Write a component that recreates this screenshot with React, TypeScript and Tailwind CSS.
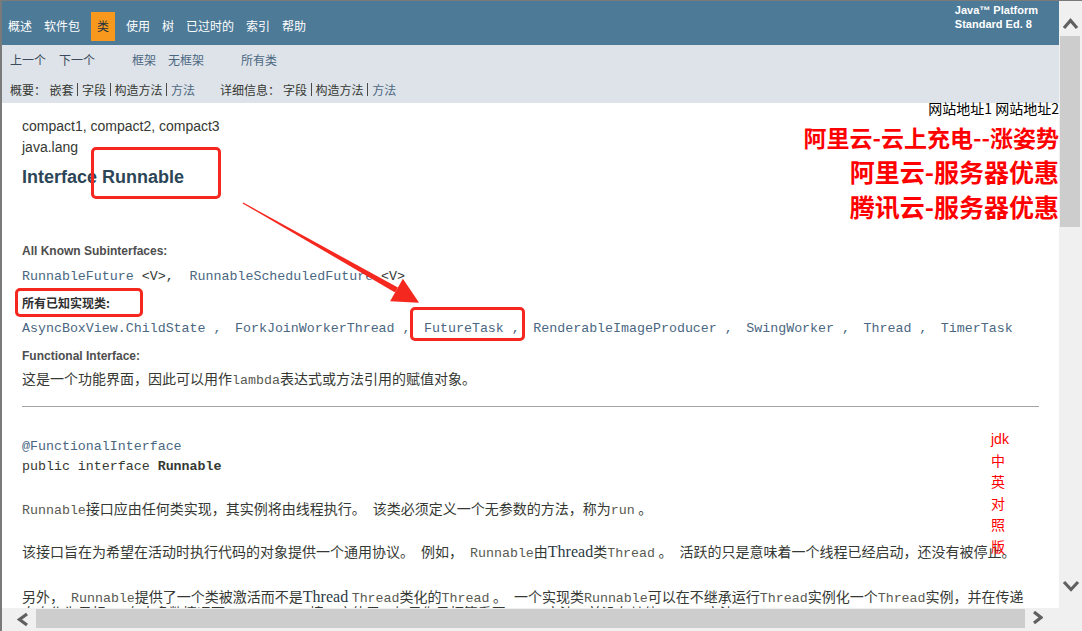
import React from "react";

const SANS = "font-['Liberation_Sans','Noto_Sans_CJK_SC',sans-serif]";
const CJK = "font-['Noto_Sans_CJK_SC',sans-serif]";
const MONO = "font-['Liberation_Mono','Noto_Sans_CJK_SC',monospace]";
const SERIF = "font-['Liberation_Serif','Noto_Sans_CJK_SC',serif]";

const topNav = [
    { name: "概述" },
    { name: "软件包" },
    { name: "类", active: true },
    { name: "使用" },
    { name: "树" },
    { name: "已过时的" },
    { name: "索引" },
    { name: "帮助" },
];

const implementing = [
    "AsyncBoxView.ChildState",
    "ForkJoinWorkerThread",
    "FutureTask",
    "RenderableImageProducer",
    "SwingWorker",
    "Thread",
    "TimerTask",
];

const Code = ({ children }: { children: React.ReactNode }) => (
    <code className={`${MONO} text-[13.3px] leading-none text-[#5a5a52]`}>{children}</code>
);

const Serif16 = ({ children }: { children: React.ReactNode }) => (
    <span className="text-[16px] leading-[12px] text-[#2c3a46]">{children}</span>
);

const Pipe = () => <span className="ml-[3.5px] mr-[4px] inline-block h-[13px] w-px bg-[#4a4a4a]"/>;

const Chevron = ({ dir }: { dir: "up" | "down" | "left" | "right" }) => {
    if (dir === "up") {
        return (
            <svg width="17" height="13" viewBox="0 0 17 13">
                <polyline points="2,11 8.5,3.5 15,11" fill="none" stroke="#606060" strokeWidth="3.2"/>
            </svg>
        );
    }
    if (dir === "down") {
        return (
            <svg width="18" height="12" viewBox="0 0 18 12">
                <polyline points="2,2 9,9.5 16,2" fill="none" stroke="#606060" strokeWidth="3.2"/>
            </svg>
        );
    }
    if (dir === "left") {
        return (
            <svg width="13" height="15" viewBox="0 0 13 15">
                <polyline points="11,2 3.5,7.5 11,13" fill="none" stroke="#606060" strokeWidth="3.2"/>
            </svg>
        );
    }
    return (
        <svg width="11" height="15" viewBox="0 0 11 15">
            <polyline points="2,2 9,7.5 2,13" fill="none" stroke="#606060" strokeWidth="3.2"/>
        </svg>
    );
};

const TopNav = () => (
    <div className="flex h-[44px] justify-between bg-[#4D7A97]">
        <ul className={`flex items-start pt-[11px] text-[12px] text-white ${CJK}`}>
            {topNav.map((item) => (
                <li key={item.name}
                    className={item.active
                        ? "mx-[5px] bg-[#F8981D] px-[6px] pt-[4px] pb-[6px] leading-[19px] text-[#253441]"
                        : "px-[6px] pt-[4px] pb-[6px] leading-[19px]"}>
                    {item.name}
                </li>
            ))}
        </ul>
        <div className={`pr-[21px] pt-[2px] text-[11px] font-bold leading-[14px] text-white ${SANS}`}>
            Java™ Platform<br/>Standard Ed. 8
        </div>
    </div>
);

const SubNav = () => (
    <div className={`h-[58px] bg-[#DEE3E9] pt-[5px] text-[12px] text-[#353833] ${CJK}`}>
        <div className="flex h-[19px] items-center pl-[8px]">
            <span className="text-[#3b4b5b]">上一个</span>
            <span className="ml-[13px] text-[#3b4b5b]">下一个</span>
            <span className="ml-[37px] text-[#4A6782]">框架</span>
            <span className="ml-[12px] text-[#4A6782]">无框架</span>
            <span className="ml-[37px] text-[#4A6782]">所有类</span>
        </div>
        <div className="mt-[11px] flex h-[19px] items-center pl-[8px]">
            <span>概要：</span>
            <span className="ml-[3.5px]">嵌套</span><Pipe/>
            <span>字段</span><Pipe/>
            <span>构造方法</span><Pipe/>
            <span className="text-[#4A6782]">方法</span>
            <span className="ml-[25px]">详细信息：</span>
            <span className="ml-[3px]">字段</span><Pipe/>
            <span>构造方法</span><Pipe/>
            <span className="text-[#4A6782]">方法</span>
        </div>
    </div>
);

const Content = () => (
    <div className={`flow-root px-[20px] text-[#353833] ${SANS}`}>
        <div className={`float-right -mr-[20px] text-right ${CJK}`}>
            <div className="text-[14px] leading-[10px] text-black">网站地址1 网站地址2</div>
            <div className="mt-[7px] text-[23px] font-bold leading-[34px] text-[#ff0000]">阿里云-云上充电--涨姿势</div>
            <div className="text-[25px] font-bold leading-[35px] text-[#ff0000]">阿里云-服务器优惠</div>
            <div className="text-[25px] font-bold leading-[35px] text-[#ff0000]">腾讯云-服务器优惠</div>
        </div>

        <div className="mt-[13px] text-[14px] leading-[20px]">compact1, compact2, compact3</div>
        <div className="mt-[1px] text-[14px] leading-[20px]">java.lang</div>
        <h2 className="mt-[8px] text-[18px] font-bold leading-[24px] text-[#2c4557]">Interface Runnable</h2>

        <div className="mt-[54px] text-[12px] font-bold leading-[16px] text-[#4E4E4E]">All Known Subinterfaces:</div>
        <div className={`mt-[8px] whitespace-pre text-[13.3px] leading-[20px] ${MONO}`}>
            <span className="text-[#4A6782]">RunnableFuture</span>
            <span>{" <V>,  "}</span>
            <span className="text-[#4A6782]">RunnableScheduledFuture</span>
            <span>{" <V>"}</span>
        </div>

        <div className={`mt-[8px] text-[12px] font-bold leading-[16px] text-[#2f2f2f] ${CJK}`}>所有已知实现类:</div>
        <div className={`mt-[7.5px] whitespace-pre text-[13.3px] leading-[20px] text-[#4A6782] ${MONO}`}>
            {implementing.map((name, i) => (
                <span key={name}>
                    {name}
                    {i < implementing.length - 1 && <span className="mr-[5.5px]">{" , "}</span>}
                </span>
            ))}
        </div>

        <div className="mt-[9px] text-[12px] font-bold leading-[16px] text-[#4E4E4E]">Functional Interface:</div>
        <div className={`mt-[6px] text-[14px] leading-[20px] ${SERIF}`}>
            这是一个功能界面，因此可以用作<Code>lambda</Code>表达式或方法引用的赋值对象。
        </div>

        <hr className="mt-[16px] border-t border-[#a4a4a4]"/>

        <div className={`mt-[30.5px] whitespace-pre text-[13.3px] leading-[20px] ${MONO}`}>
            <div className="text-[#4A6782]">@FunctionalInterface</div>
            <div>public interface <b>Runnable</b></div>
        </div>

        <div className={`mt-[25px] max-w-[1005px] text-[14px] leading-[16px] ${SERIF}`}>
            <Code>Runnable</Code>接口应由任何类实现，其实例将由线程执行。{"\u2002"}该类必须定义一个无参数的方法，称为<Code>run</Code> 。
        </div>
        <div className={`mt-[27px] max-w-[1005px] text-[14px] leading-[16px] ${SERIF}`}>
            该接口旨在为希望在活动时执行代码的对象提供一个通用协议。{"\u2002"}例如，{"\u2002"}<Code>Runnable</Code>由<Serif16>Thread</Serif16>类<Code>Thread</Code> 。{"\u2002"}活跃的只是意味着一个线程已经启动，还没有被停止。
        </div>
        <div className={`mt-[28.5px] max-w-[1005px] text-[14px] leading-[16px] ${SERIF}`}>
            另外，{"\u2002"}<Code>Runnable</Code>提供了一个类被激活而不是<Serif16>Thread</Serif16> <Code>Thread</Code>类化的<Code>Thread</Code> 。{"\u2002"}一个实现类<Code>Runnable</Code>可以在不继承运行<Code>Thread</Code>实例化一个<Code>Thread</Code>实例，并在传递自身作为目标。{"\u2002"}在大多数情况下，{"\u2002"}<Code>Runnable</Code>接口应使用，如果你只打算重写<Code>run()</Code>方法，并没有其他<Code>Thread</Code>方法。
        </div>
    </div>
);

const VScroll = () => (
    <div className="flex h-[607px] w-[23px] flex-col bg-[#f0f0f0]">
        <div className="h-[35px] pl-[3px] pt-[16px]">
            <Chevron dir="up"/>
        </div>
        <div className="ml-[1px] h-[191px] w-[20px] bg-[#cdcdcd]"/>
        <div className="flex-1"/>
        <div className="h-[35px] pl-[3px] pt-[7px]">
            <Chevron dir="down"/>
        </div>
    </div>
);

const HScroll = () => (
    <div className="flex h-[23px] bg-[#f0f0f0]">
        <div className="w-[34px] pl-[14px] pt-[4px]">
            <Chevron dir="left"/>
        </div>
        <div className="mt-[1px] h-[19px] w-[989px] bg-[#cdcdcd]"/>
        <div className="w-[34px] pl-[7px] pt-[2px]">
            <Chevron dir="right"/>
        </div>
        <div className="w-[23px]"/>
    </div>
);

export default function App() {
    return (
        <div className="relative flex h-[631px] w-[1082px] flex-col overflow-hidden border-t border-l-2 border-[#7a7a7a] bg-[#f0f0f0]">
            <div className="flex h-[607px]">
                <div className="h-[607px] w-[1057px] overflow-hidden bg-white">
                    <TopNav/>
                    <SubNav/>
                    <Content/>
                </div>
                <VScroll/>
            </div>
            <HScroll/>

            {/* annotations drawn over the page */}
            <div className="pointer-events-none absolute left-[89px] top-[146px] h-[52px] w-[130px] rounded-[5px] border-[3px] border-[#f5281f]"/>
            <div className="pointer-events-none absolute left-[13px] top-[287px] h-[29px] w-[128px] rounded-[5px] border-[3px] border-[#f5281f]"/>
            <div className="pointer-events-none absolute left-[408px] top-[306px] h-[34px] w-[115px] rounded-[5px] border-[3px] border-[#f5281f]"/>
            <svg className="pointer-events-none absolute left-[-2px] top-[-1px]" width="1082" height="631" viewBox="0 0 1082 631">
                <polygon points="242.7,203.4 243.3,202.6 397.9,287.6 395.1,292.4" fill="#f5281f"/>
                <polygon points="390.1,301.3 402.9,278.7 419.1,302.8" fill="#f5281f"/>
            </svg>
            <div className={`absolute left-[989px] top-[428px] w-[20px] text-[14px] leading-[21.5px] text-[#ff0000] ${SANS}`}>
                jdk中英对照版
            </div>
        </div>
    );
}
